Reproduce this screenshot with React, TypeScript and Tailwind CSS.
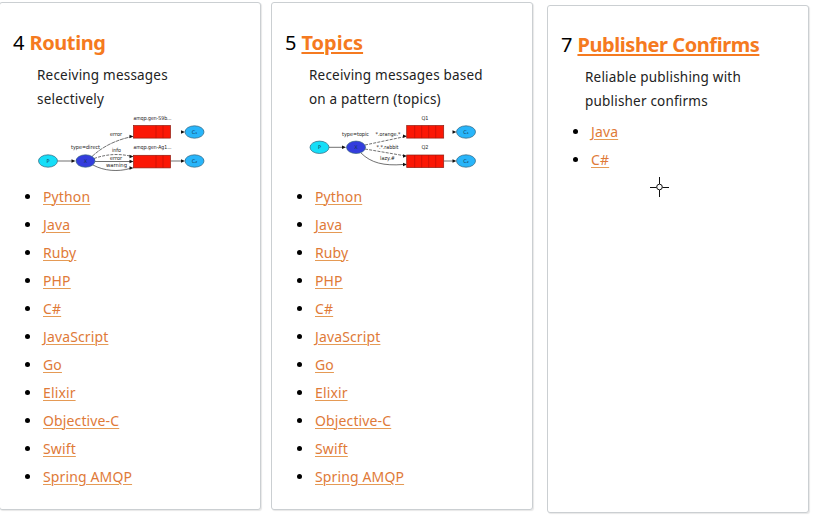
import type { ReactNode } from "react";

const LANGUAGES = ["Python", "Java", "Ruby", "PHP", "C#", "JavaScript", "Go", "Elixir", "Objective-C", "Swift", "Spring AMQP"];

function Node({ x, y, fill, label }: { x: number; y: number; fill: string; label: string }) {
  return (
    <g>
      <ellipse cx={x} cy={y} rx="9.5" ry="6.2" fill={fill} stroke="#37647c" strokeWidth="0.7" />
      <text x={x} y={y + 1.7} textAnchor="middle" fontSize="5" fill="#143653">{label}</text>
    </g>
  );
}

function Queue({ x, y, lines }: { x: number; y: number; lines: number[] }) {
  return (
    <g>
      <rect x={x} y={y} width="37" height="12.6" fill="#fb1705" stroke="#8e1d12" strokeWidth="0.7" />
      {lines.map((l) => (
        <path key={l} d={`M${x + l} ${y}v12.6`} stroke="#b80d05" strokeWidth="0.6" />
      ))}
    </g>
  );
}

function Arrow({ x, y }: { x: number; y: number }) {
  return <path d={`M${x} ${y}l-4 -1.8v3.6z`} fill="#111" />;
}

function Label({ x, y, w, children }: { x: number; y: number; w: number; children: string }) {
  return (
    <text x={x} y={y} textLength={w} lengthAdjust="spacingAndGlyphs" fontSize="5.5" fill="#222">{children}</text>
  );
}

function RoutingDiagram() {
  return (
    <svg className="block h-[62px] w-[172px] font-['DejaVu_Sans',sans-serif]" viewBox="36 112 172 62">
      <g fill="none" stroke="#333" strokeWidth="0.7">
        <path d="M57.5 161H72" />
        <path d="M92 156.5C101 148 113 141 130 137" strokeDasharray="4 0.7" />
        <path d="M94 158.5C107 154 118 153.5 130 156" strokeDasharray="3 1.2" />
        <path d="M95 161.5H130" />
        <path d="M93 165C104 171 118 172 130 168.5" />
        <path d="M171 161H181" />
      </g>
      <Arrow x={133.5} y={136.5} />
      <Arrow x={133.5} y={156.5} />
      <Arrow x={133.5} y={161.5} />
      <Arrow x={133.5} y={168} />
      <Arrow x={75.5} y={161} />
      <Arrow x={185} y={132} />
      <Arrow x={185} y={161} />
      <Node x={48} y={161} fill="#16def8" label="P" />
      <Node x={85.5} y={161} fill="#333ddd" label="X" />
      <Queue x={133.5} y={125.5} lines={[22.5, 29.5]} />
      <Queue x={133.5} y={155.3} lines={[22.5, 29.5]} />
      <Node x={194.5} y={132} fill="#28b5fa" label="C₁" />
      <Node x={194.5} y={161} fill="#28b5fa" label="C₂" />
      <Label x={71} y={149} w={29}>type=direct</Label>
      <Label x={110} y={136} w={12}>error</Label>
      <Label x={112} y={152} w={9}>info</Label>
      <Label x={110} y={159.5} w={12}>error</Label>
      <Label x={106} y={166.5} w={21}>warning</Label>
      <Label x={133.5} y={120} w={38}>amqp.gen-S9b...</Label>
      <Label x={133.5} y={149} w={38}>amqp.gen-Ag1...</Label>
    </svg>
  );
}

function TopicsDiagram() {
  return (
    <svg className="block h-[62px] w-[172px] font-['DejaVu_Sans',sans-serif]" viewBox="308 112 172 62">
      <g fill="none" stroke="#333" strokeWidth="0.7">
        <path d="M329 147.3H342" />
        <path d="M365 145L403 137" strokeDasharray="3 1.2" />
        <path d="M365 149L403 155.5" strokeDasharray="3 1.2" />
        <path d="M361 153C371 163 384 166 403 164.5" />
        <path d="M444 161H453" />
      </g>
      <Arrow x={346} y={147.3} />
      <Arrow x={407} y={136.3} />
      <Arrow x={407} y={156} />
      <Arrow x={407} y={164.5} />
      <Arrow x={456.5} y={132} />
      <Arrow x={456.5} y={161} />
      <Node x={319.5} y={147.3} fill="#16def8" label="P" />
      <Node x={356} y={147.3} fill="#333ddd" label="X" />
      <Queue x={406.7} y={125.5} lines={[8, 15, 22, 29]} />
      <Queue x={406.7} y={155} lines={[8, 15, 22, 29]} />
      <Node x={466} y={132} fill="#28b5fa" label="C₁" />
      <Node x={466} y={161} fill="#28b5fa" label="C₂" />
      <Label x={342} y={136} w={27}>type=topic</Label>
      <Label x={375.5} y={136} w={25}>*.orange.*</Label>
      <Label x={376.5} y={149} w={22}>*.*.rabbit</Label>
      <Label x={380} y={160} w={15}>lazy.#</Label>
      <Label x={421.5} y={120} w={7}>Q1</Label>
      <Label x={421.5} y={149} w={7}>Q2</Label>
    </svg>
  );
}

interface CardProps {
  number: number;
  heading: ReactNode;
  lines: [string, string];
  diagram?: ReactNode;
  languages: string[];
  className: string;
}

function Card({ number, heading, lines, diagram, languages, className }: CardProps) {
  return (
    <section className={`h-[508px] w-[262px] shrink-0 rounded-[3px] border border-[#cbcfd2] bg-white shadow-[1px_1px_1px_#e8e8e8] ${className}`}>
      <h2 className="flex h-7 items-center gap-[5px] whitespace-nowrap pl-[13px] text-[20px]">
        <span className="font-normal">{number}</span>
        {heading}
      </h2>
      <p className="mt-[7px] pl-[37px] text-[13.5px] leading-[23.5px] tracking-[0.2px] text-[#222]">
        {lines[0]}
        <br />
        {lines[1]}
      </p>
      {diagram && <div className="mt-px mb-[8px] pl-9">{diagram}</div>}
      <ul className={diagram ? "" : "mt-[4px]"}>
        {languages.map((language) => (
          <li key={language} className="flex h-7 items-center pl-[25px] text-[14px] tracking-[0.13px]">
            <span className="mr-[13px] size-[5px] rounded-full bg-black" />
            <a className="text-[#e07a38] underline decoration-[#e59a55] decoration-1 underline-offset-[1.5px]">{language}</a>
          </li>
        ))}
      </ul>
    </section>
  );
}

export default function App() {
  return (
    <main className="relative flex h-[516px] w-[814px] items-start overflow-hidden bg-white font-['Noto_Sans',sans-serif] text-black">
      <Card
        className="-ml-px mt-[2px] pt-[26px]"
        number={4}
        heading={<span className="font-bold tracking-[-0.4px] text-[#f57a20]">Routing</span>}
        lines={["Receiving messages", "selectively"]}
        diagram={<RoutingDiagram />}
        languages={LANGUAGES}
      />
      <Card
        className="ml-[10px] mt-[2px] pt-[26px]"
        number={5}
        heading={<a className="font-bold text-[#f57a20] underline decoration-2 underline-offset-[1.5px]">Topics</a>}
        lines={["Receiving messages based", "on a pattern (topics)"]}
        diagram={<TopicsDiagram />}
        languages={LANGUAGES}
      />
      <Card
        className="ml-[14px] mt-[5px] pt-[25px]"
        number={7}
        heading={<a className="font-bold tracking-[-0.43px] text-[#f57a20] underline decoration-2 underline-offset-[1.5px]">Publisher Confirms</a>}
        lines={["Reliable publishing with", "publisher confirms"]}
        languages={["Java", "C#"]}
      />
      <svg className="absolute left-[649px] top-[177px] size-5" viewBox="0 0 20 20" fill="none" stroke="#111" strokeWidth="1">
        <circle cx="10.5" cy="10" r="2.8" />
        <path d="M1 10.5h6.5M13.5 10.5H20M10.5 0v7M10.5 13v7" />
      </svg>
    </main>
  );
}
